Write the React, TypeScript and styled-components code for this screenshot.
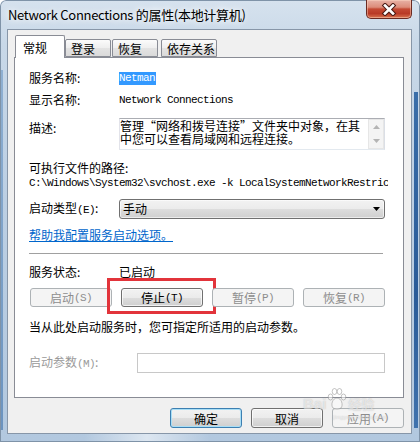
import React from "react";
import styled, { createGlobalStyle } from "styled-components";

const Global = createGlobalStyle`
  html, body { margin: 0; padding: 0; }
  body { width: 420px; height: 442px; overflow: hidden; background: #ffffff; }
  * { box-sizing: border-box; }
`;

const CJK = `"Noto Sans CJK SC", "Microsoft YaHei", sans-serif`;
const MONO = `"Liberation Mono", "DejaVu Sans Mono", monospace`;

const Window = styled.div`
  position: relative;
  width: 420px;
  height: 442px;
  display: flex;
  flex-direction: column;
  font-family: ${CJK};
  font-size: 12px;
  color: #000;
  border-radius: 6px 6px 0 0;
  background:
    linear-gradient(to bottom, #3a6ea9, #2a5b98 60%, #3f72ad) 414px 92px / 4px 336px no-repeat,
    linear-gradient(to bottom, #8fb0d2, #6b93bf) 1px 70px / 2px 360px no-repeat,
    linear-gradient(to right, rgba(255,255,255,0) 20%, rgba(255,255,255,0.55) 35%, rgba(255,255,255,0) 50%) 0 434px / 420px 8px no-repeat,
    linear-gradient(to bottom, #d6e2ee 0%, #c8d8e8 10%, #bccfe3 45%, #b2c8df 100%);
  box-shadow: inset 0 0 0 1px #7f93a8;
`;

const TitleBar = styled.div`
  height: 29px;
  display: flex;
  align-items: flex-start;
  flex: none;
`;

const Title = styled.div`
  padding-left: 8px;
  line-height: 29px;
  font-size: 13px;
  letter-spacing: -0.3px;
  color: #000;
  white-space: nowrap;
  text-shadow: 0 0 6px rgba(255, 255, 255, 0.95), 0 0 10px rgba(255, 255, 255, 0.8);
`;

const CloseButton = styled.div`
  margin-left: auto;
  margin-right: 8px;
  width: 46px;
  height: 19px;
  display: flex;
  align-items: center;
  justify-content: center;
  border: 1px solid #6a2a22;
  border-top: none;
  border-radius: 0 0 5px 5px;
  background: linear-gradient(
    to bottom,
    #e8b2a6 0%,
    #dc8c7a 40%,
    #c44a34 50%,
    #b93a26 75%,
    #d9734f 100%
  );
  box-shadow: inset 0 0 0 1px rgba(255, 220, 200, 0.45);
`;

const Client = styled.div`
  position: relative;
  flex: 1;
  margin: 0 8px 8px 7px;
  background: #f0f0f0;
  border: 1px solid #8796a8;
  padding: 5px 7px 5px 6px;
  display: flex;
  flex-direction: column;
`;

const TabStrip = styled.div`
  height: 22px;
  flex: none;
  display: flex;
  align-items: flex-end;
  padding-left: 1px;
  position: relative;
  z-index: 1;
`;

const Tab = styled.div<{ $active?: boolean; $w: number; $gap?: number }>`
  width: ${(p) => p.$w}px;
  margin-left: ${(p) => p.$gap ?? 0}px;
  height: ${(p) => (p.$active ? 23 : 18)}px;
  margin-bottom: ${(p) => (p.$active ? -1 : 0)}px;
  padding-left: ${(p) => (p.$active ? 7 : 5)}px;
  display: flex;
  align-items: center;
  font-size: 12px;
  border: 1px solid #898c95;
  border-bottom: ${(p) => (p.$active ? "none" : "1px solid #898c95")};
  border-radius: 2px 2px 0 0;
  background: ${(p) =>
    p.$active
      ? "#ffffff"
      : "linear-gradient(to bottom, #fbfbfb 0%, #eeeeee 50%, #e3e3e3 51%, #dadada 100%)"};
  padding-top: ${(p) => (p.$active ? 0 : 1)}px;
`;

const Panel = styled.div`
  height: 341px;
  flex: none;
  background: #ffffff;
  border: 1px solid #898c95;
  padding: 12px 18px 0 14px;
  display: flex;
  flex-direction: column;
`;

const Row = styled.div<{ $mt?: number; $h: number; $top?: boolean }>`
  display: flex;
  align-items: ${(p) => (p.$top ? "flex-start" : "center")};
  margin-top: ${(p) => p.$mt ?? 0}px;
  height: ${(p) => p.$h}px;
  flex: none;
`;

const Label = styled.div<{ $w?: number; $pt?: number; $disabled?: boolean }>`
  width: ${(p) => p.$w ?? 90}px;
  flex: none;
  line-height: 16px;
  padding-top: ${(p) => p.$pt ?? 0}px;
  white-space: nowrap;
  color: ${(p) => (p.$disabled ? "#9a9a9a" : "#000")};
`;

const Text = styled.div`
  line-height: 16px;
  white-space: nowrap;
`;

const Mono = styled.span`
  font-family: ${MONO};
  font-size: 11px;
  letter-spacing: -0.6px;
`;

const Selected = styled.span`
  font-family: ${MONO};
  font-size: 11px;
  letter-spacing: -0.6px;
  line-height: 13px;
  background: #3399ff;
  color: #ffffff;
  padding: 0 1px 0 0;
`;

const MonoLine = styled.div`
  font-family: ${MONO};
  font-size: 11px;
  letter-spacing: -0.6px;
  line-height: 14px;
  white-space: nowrap;
  overflow: hidden;
  margin-right: -3px;
`;

const DescBox = styled.div`
  flex: 1;
  height: 32px;
  display: flex;
  border: 1px solid;
  border-color: #abadb3 #dbdfe6 #e3e9ef #e2e3ea;
  background: #ffffff;
`;

const DescText = styled.div`
  flex: 1;
  font-size: 12px;
  line-height: 13px;
  white-space: nowrap;
`;

const ScrollBar = styled.div`
  width: 16px;
  flex: none;
  display: flex;
  flex-direction: column;
  background: #f4f4f4;
  border: 1px solid #e6e6e6;
`;

const ScrollArrow = styled.div`
  flex: 1;
  display: flex;
  align-items: center;
  justify-content: center;
`;

const Combo = styled.div`
  flex: 1;
  height: 20px;
  display: flex;
  align-items: center;
  padding: 0 4px 0 3px;
  border: 1px solid #707070;
  border-radius: 3px;
  background: linear-gradient(to bottom, #f2f2f2 0%, #ebebeb 50%, #dddddd 51%, #cfcfcf 100%);
  box-shadow: inset 0 0 0 1px rgba(255, 255, 255, 0.6);
`;

const ComboText = styled.div`
  flex: 1;
  line-height: 16px;
`;

const Link = styled.a`
  color: #0066cc;
  text-decoration: underline;
  line-height: 16px;
  cursor: pointer;
`;

const Separator = styled.div`
  margin-top: 10px;
  margin-right: 2px;
  height: 1px;
  flex: none;
  background: #a0a0a0;
`;

const ButtonGroup = styled.div<{ $mt: number }>`
  display: flex;
  gap: 9px;
  margin-top: ${(p) => p.$mt}px;
  margin-left: 1px;
  flex: none;
`;

const Button = styled.div<{ $disabled?: boolean; $default?: boolean; $w: number; $h: number }>`
  position: relative;
  width: ${(p) => p.$w}px;
  height: ${(p) => p.$h}px;
  display: flex;
  align-items: center;
  justify-content: center;
  font-size: 12px;
  border-radius: 3px;
  border: 1px solid
    ${(p) => (p.$disabled ? "#adb2b5" : p.$default ? "#3c7fb1" : "#707070")};
  color: ${(p) => (p.$disabled ? "#8d8d8d" : "#000")};
  background: ${(p) =>
    p.$disabled
      ? "#f4f4f4"
      : "linear-gradient(to bottom, #f2f2f2 0%, #ebebeb 50%, #dddddd 51%, #cfcfcf 100%)"};
  box-shadow: ${(p) =>
    p.$disabled
      ? "none"
      : p.$default
      ? "inset 0 0 0 1px #a8def6"
      : "inset 0 0 0 1px rgba(255,255,255,0.7)"};
`;

const Highlight = styled.div`
  position: relative;
  display: flex;
  &::after {
    content: "";
    position: absolute;
    left: -14px;
    right: -13px;
    top: -10px;
    bottom: -7px;
    border: 3px solid #e2343b;
  }
`;

const ParamInput = styled.div`
  flex: 1;
  height: 20px;
  border: 1px solid #c8c8c8;
  background: #ffffff;
`;

const Footer = styled.div`
  margin-top: 10px;
  display: flex;
  justify-content: flex-end;
  gap: 9px;
  flex: none;
`;

const Watermark = styled.div`
  position: absolute;
  left: 295px;
  top: 357px;
  display: flex;
  flex-direction: column;
  align-items: flex-start;
  pointer-events: none;
  color: rgba(255, 255, 255, 0.6);
  text-shadow: 0 0 1px rgba(120, 120, 120, 0.5);
  opacity: 0.85;
`;

const WatermarkMain = styled.div`
  display: flex;
  align-items: flex-end;
  gap: 0;
  font-family: "Liberation Sans", Arial, sans-serif;
  font-weight: bold;
  font-size: 15px;
  line-height: 15px;
`;

const WatermarkCJK = styled.span`
  font-family: ${CJK};
  font-size: 13px;
  line-height: 15px;
`;

const WatermarkSmall = styled.div`
  font-family: "Liberation Sans", Arial, sans-serif;
  font-size: 6px;
  line-height: 7px;
  padding-left: 30px;
  margin-top: 3px;
  letter-spacing: 0.3px;
`;

const Triangle = ({ dir, color, w = 7, h = 4 }: { dir: "up" | "down"; color: string; w?: number; h?: number }) => (
  <svg width={w} height={h} viewBox={`0 0 ${w} ${h}`}>
    {dir === "down" ? (
      <polygon points={`0,0 ${w},0 ${w / 2},${h}`} fill={color} />
    ) : (
      <polygon points={`0,${h} ${w},${h} ${w / 2},0`} fill={color} />
    )}
  </svg>
);

const CloseX = () => (
  <svg width="16" height="13" viewBox="0 0 16 13">
    <path d="M4 2.5 L12 10.5 M12 2.5 L4 10.5" stroke="#4a1a14" strokeWidth="4.6" strokeLinecap="square" />
    <path d="M4 2.5 L12 10.5 M12 2.5 L4 10.5" stroke="#ffffff" strokeWidth="2.6" strokeLinecap="square" />
  </svg>
);

const Paw = () => (
  <svg width="22" height="24" viewBox="0 0 22 24">
    <g fill="rgba(255,255,255,0.6)" stroke="rgba(120,120,120,0.5)" strokeWidth="1">
      <ellipse cx="4.5" cy="10" rx="2.3" ry="3" />
      <ellipse cx="8.5" cy="4.5" rx="2.3" ry="3" />
      <ellipse cx="13.5" cy="4.5" rx="2.3" ry="3" />
      <ellipse cx="17.5" cy="10" rx="2.3" ry="3" />
      <path d="M11 11 C6.5 11 4.5 18 7 21 C9 22.5 13 22.5 15 21 C17.5 18 15.5 11 11 11 Z" />
    </g>
  </svg>
);

export default function App() {
  return (
    <>
      <Global />
      <Window>
        <TitleBar>
          <Title>Network Connections 的属性(本地计算机)</Title>
          <CloseButton>
            <CloseX />
          </CloseButton>
        </TitleBar>
        <Client>
          <TabStrip>
            <Tab $active $w={50}>常规</Tab>
            <Tab $w={46}>登录</Tab>
            <Tab $w={46} $gap={1}>恢复</Tab>
            <Tab $w={56} $gap={3}>依存关系</Tab>
          </TabStrip>
          <Panel>
            <Row $h={16}>
              <Label>服务名称:</Label>
              <Selected>Netman</Selected>
            </Row>
            <Row $mt={6} $h={16}>
              <Label>显示名称:</Label>
              <Mono>Network Connections</Mono>
            </Row>
            <Row $mt={10} $h={32} $top>
              <Label $pt={2}>描述:</Label>
              <DescBox>
                <DescText>
                  管理“网络和拨号连接”文件夹中对象，在其
                  <br />
                  中您可以查看局域网和远程连接。
                </DescText>
                <ScrollBar>
                  <ScrollArrow>
                    <Triangle dir="up" color="#b4b4b4" />
                  </ScrollArrow>
                  <ScrollArrow>
                    <Triangle dir="down" color="#b4b4b4" />
                  </ScrollArrow>
                </ScrollBar>
              </DescBox>
            </Row>
            <Row $mt={10} $h={16}>
              <Text>可执行文件的路径:</Text>
            </Row>
            <MonoLine>C:\Windows\System32\svchost.exe -k LocalSystemNetworkRestricted</MonoLine>
            <Row $mt={9} $h={20}>
              <Label>
                启动类型<Mono>(E)</Mono>:
              </Label>
              <Combo>
                <ComboText>手动</ComboText>
                <Triangle dir="down" color="#000000" />
              </Combo>
            </Row>
            <Row $mt={8} $h={16}>
              <Link>帮助我配置服务启动选项。</Link>
            </Row>
            <Separator />
            <Row $mt={10} $h={16}>
              <Label>服务状态:</Label>
              <Text>已启动</Text>
            </Row>
            <ButtonGroup $mt={8}>
              <Button $disabled $w={82} $h={19}>
                启动<Mono>(S)</Mono>
              </Button>
              <Highlight>
                <Button $w={82} $h={19}>
                  停止<Mono>(T)</Mono>
                </Button>
              </Highlight>
              <Button $disabled $w={82} $h={19}>
                暂停<Mono>(P)</Mono>
              </Button>
              <Button $disabled $w={82} $h={19}>
                恢复<Mono>(R)</Mono>
              </Button>
            </ButtonGroup>
            <Row $mt={12} $h={16}>
              <Text>当从此处启动服务时，您可指定所适用的启动参数。</Text>
            </Row>
            <Row $mt={18} $h={20}>
              <Label $w={108} $disabled>
                启动参数<Mono>(M)</Mono>:
              </Label>
              <ParamInput />
            </Row>
          </Panel>
          <Footer>
            <Button $default $w={72} $h={20}>确定</Button>
            <Button $w={72} $h={20}>取消</Button>
            <Button $disabled $w={72} $h={20}>
              应用<Mono>(A)</Mono>
            </Button>
          </Footer>
          <Watermark>
            <WatermarkMain>
              Bai
              <Paw />
              <WatermarkCJK>经验</WatermarkCJK>
            </WatermarkMain>
            <WatermarkSmall>jingyan.baidu.com</WatermarkSmall>
          </Watermark>
        </Client>
      </Window>
    </>
  );
}
